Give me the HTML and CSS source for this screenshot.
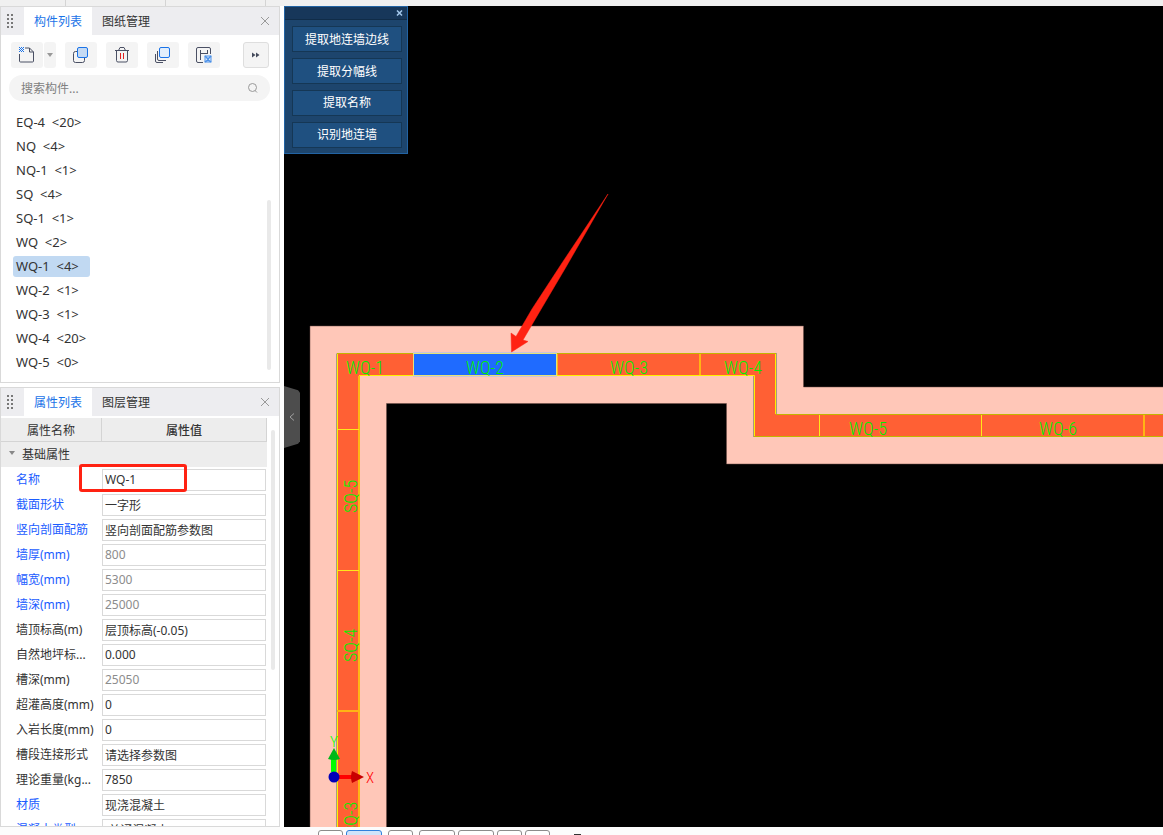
FILE: index.html
```html
<!DOCTYPE html>
<html lang="zh-CN">
<head>
<meta charset="utf-8">
<title>构件列表</title>
<link rel="stylesheet" href="styles.css">
</head>
<body>
<div class="app">
  <div class="ribbon-edge"><i></i><i></i><i></i></div>
  <aside class="sidebar">
    <section class="panel">
      <header class="tabs">
        <svg class="grip" width="8" height="15" viewBox="0 0 8 15"><path d="M1 0v15M5 0v15" stroke="#777" stroke-width="2" stroke-dasharray="2 2"/></svg>
        <button class="tab active">构件列表</button>
        <button class="tab">图纸管理</button>
        <button class="close" aria-label="关闭"><svg width="10" height="10" viewBox="0 0 10 10"><path d="M1 1l8 8M9 1l-8 8" stroke="#999"/></svg></button>
      </header>
      <div class="toolbar">
        <div class="split">
          <button class="tool" aria-label="新建"><svg width="18" height="18" viewBox="0 0 18 18" fill="none"><path d="M1.500 8v7a1 1 0 0 0 1 1h12a1 1 0 0 0 1-1V6l-4-4H7M11.500 2v4h4" stroke="#4a5064"/><path d="M1 1.500h5M1 3.500h5M1 5.500h5" stroke="#1a73e8" stroke-dasharray="1 1"/><path d="M2 2.500h4M2 4.500h4" stroke="#1a73e8" stroke-dasharray="1 1"/></svg></button>
          <button class="drop" aria-label="更多新建"><svg width="6" height="4" viewBox="0 0 6 4"><path d="M0 0h6L3 4z" fill="#999"/></svg></button>
        </div>
        <button class="tool" aria-label="复制"><svg width="18" height="18" viewBox="0 0 18 18"><rect x="1.500" y="5.500" width="11" height="11" rx="2" fill="#f4f4f4" stroke="#4a5064"/><rect x="5.500" y="1.500" width="10" height="10" rx="1.500" fill="#c5daf3" stroke="#1a73e8"/></svg></button>
        <button class="tool" aria-label="删除"><svg width="18" height="18" viewBox="0 0 18 18" fill="none"><path d="M2 4.500h14M5.500 4.500l1.500-3h4l1.500 3M3.500 4.500v10a1.500 1.500 0 0 0 1.500 1.500h8a1.500 1.500 0 0 0 1.500-1.500v-10" stroke="#4a5064"/><path d="M7.500 7v6M10.500 7v6" stroke="#e02020"/></svg></button>
        <button class="tool" aria-label="层间复制"><svg width="18" height="18" viewBox="0 0 18 18" fill="none"><path d="M1.500 8v7a1.500 1.500 0 0 0 1.500 1.500h6M3.500 5v8a1.500 1.500 0 0 0 1.500 1.500h7" stroke="#4a5064"/><rect x="5.500" y="1.500" width="10" height="10" rx="1.500" fill="#e2eefc" stroke="#1a73e8"/></svg></button>
        <button class="tool" aria-label="存档"><svg width="18" height="18" viewBox="0 0 18 18" fill="none"><path d="M8 16.500H3A1.500 1.500 0 0 1 1.500 15V3A1.500 1.500 0 0 1 3 1.500h11A1.500 1.500 0 0 1 15.500 3v5M5.500 4v10M5.500 7.500h7M12.500 4v4" stroke="#4a5064"/><rect x="10" y="10" width="6" height="6" fill="#dceafc" stroke="#4a90e8"/><path d="M10 10l3 3 3-3M10 16l3-2 3 2" stroke="#4a90e8" stroke-width="1.500"/></svg></button>
        <button class="tool more" aria-label="更多"><svg width="8" height="6" viewBox="0 0 8 6"><path d="M0 .5l3.500 2.500L0 5.500zM4 .5l3.500 2.500L4 5.500z" fill="#444b5c"/></svg></button>
      </div>
      <div class="search">
        <input type="text" placeholder="搜索构件..." aria-label="搜索构件">
        <svg width="12" height="12" viewBox="0 0 12 12" fill="none" stroke="#999"><circle cx="5.500" cy="5.500" r="4"/><path d="M8 8.500l2 2"/></svg>
      </div>
      <div class="list-wrap">
        <ul class="list">
          <li><span>EQ-4  &lt;20&gt;</span></li>
          <li><span>NQ  &lt;4&gt;</span></li>
          <li><span>NQ-1  &lt;1&gt;</span></li>
          <li><span>SQ  &lt;4&gt;</span></li>
          <li><span>SQ-1  &lt;1&gt;</span></li>
          <li><span>WQ  &lt;2&gt;</span></li>
          <li class="selected"><span>WQ-1  &lt;4&gt;</span></li>
          <li><span>WQ-2  &lt;1&gt;</span></li>
          <li><span>WQ-3  &lt;1&gt;</span></li>
          <li><span>WQ-4  &lt;20&gt;</span></li>
          <li><span>WQ-5  &lt;0&gt;</span></li>
        </ul>
        <div class="thumb list-thumb"></div>
      </div>
    </section>
    <section class="panel props">
      <header class="tabs">
        <svg class="grip" width="8" height="15" viewBox="0 0 8 15"><path d="M1 0v15M5 0v15" stroke="#777" stroke-width="2" stroke-dasharray="2 2"/></svg>
        <button class="tab active">属性列表</button>
        <button class="tab">图层管理</button>
        <button class="close" aria-label="关闭"><svg width="10" height="10" viewBox="0 0 10 10"><path d="M1 1l8 8M9 1l-8 8" stroke="#999"/></svg></button>
      </header>
      <div class="table-wrap">
        <table>
          <colgroup><col class="name-col"><col></colgroup>
          <thead><tr><th class="name-head">属性名称</th><th>属性值</th></tr></thead>
          <tbody>
            <tr class="group"><td colspan="2"><svg width="6" height="4" viewBox="0 0 6 4"><path d="M0 0h6L3 4z" fill="#888"/></svg>基础属性</td></tr>
            <tr class="key"><td><label for="p1">名称</label></td><td class="marked"><input id="p1" value="WQ-1"><span class="callout"></span></td></tr>
            <tr class="key"><td><label for="p2">截面形状</label></td><td><input id="p2" value="一字形"></td></tr>
            <tr class="key"><td><label for="p3">竖向剖面配筋</label></td><td><input id="p3" value="竖向剖面配筋参数图"></td></tr>
            <tr class="key"><td><label for="p4">墙厚(mm)</label></td><td><input id="p4" class="dim" value="800"></td></tr>
            <tr class="key"><td><label for="p5">幅宽(mm)</label></td><td><input id="p5" class="dim" value="5300"></td></tr>
            <tr class="key"><td><label for="p6">墙深(mm)</label></td><td><input id="p6" class="dim" value="25000"></td></tr>
            <tr><td><label for="p7">墙顶标高(m)</label></td><td><input id="p7" value="层顶标高(-0.05)"></td></tr>
            <tr><td><label for="p8">自然地坪标...</label></td><td><input id="p8" value="0.000"></td></tr>
            <tr><td><label for="p9">槽深(mm)</label></td><td><input id="p9" class="dim" value="25050"></td></tr>
            <tr><td><label for="p10">超灌高度(mm)</label></td><td><input id="p10" value="0"></td></tr>
            <tr><td><label for="p11">入岩长度(mm)</label></td><td><input id="p11" value="0"></td></tr>
            <tr><td><label for="p12">槽段连接形式</label></td><td><input id="p12" value="请选择参数图"></td></tr>
            <tr><td><label for="p13">理论重量(kg...</label></td><td><input id="p13" value="7850"></td></tr>
            <tr class="key"><td><label for="p14">材质</label></td><td><input id="p14" value="现浇混凝土"></td></tr>
            <tr class="key"><td><label for="p15">混凝土类型</label></td><td><input id="p15" value="(普通混凝土)"></td></tr>
          </tbody>
        </table>
        <div class="thumb props-thumb"></div>
      </div>
    </section>
  </aside>
  <main class="canvas">
    <svg class="drawing" width="100%" height="100%">
      <g transform="translate(-284 -6)">
        <path d="M310 326H803.500V387H2400V464H726.500V403.500H386.500V2400H310z" fill="#ffc7b8" stroke="#6b4a44" stroke-width="0.500"/>
        <path d="M337.500 353.500H776V414.500H2400V436.500H754V375.500H359.500V2400H337.500z" fill="#ff6034"/>
        <path d="M336.500 2400V353.500M776.500 353V414M753.500 376V437" fill="none" stroke="#a89a80"/>
        <path d="M337.500 2400V353.500M413 375.500H754.500V436M359 375.500H413M775.500 353.500V414" fill="none" stroke="#fff000"/>
        <path d="M337 353.500H776M776 414.500H2400M754 436.500H2400" fill="none" stroke="#c4b400"/>
        <path d="M359 376V2400M700 354V375M557 354V375M337 711H359M1144 415V436" fill="none" stroke="#ffb414" stroke-width="2"/>
        <path d="M337 429.500H359M337 570.500H359M819.500 415V436M981.500 415V436" fill="none" stroke="#ffe81a"/>
        <rect x="413.500" y="353.500" width="143" height="22" fill="#1f6bff" stroke="#e5e27a"/>
        <path d="M413 352.500H557M413 376.500H557" stroke="#c8c4dc"/>
        <g class="cad">
          <text x="346" y="374">WQ-1</text>
          <text x="466" y="374">WQ-2</text>
          <text x="610" y="374">WQ-3</text>
          <text x="724" y="374">WQ-4</text>
          <text x="849" y="435">WQ-5</text>
          <text x="1039" y="435">WQ-6</text>
          <text transform="translate(357 513) rotate(-90)">SQ-5</text>
          <text transform="translate(357 662) rotate(-90)">SQ-4</text>
          <text transform="translate(357 835) rotate(-90)">SQ-3</text>
        </g>
        <path d="M331 758h5v14h-5z" fill="#0f0"/><path d="M334 748l6 11q-6 2-12 0z" fill="#00b818"/>
        <path d="M338 775h14v4h-14z" fill="#f00"/><path d="M364 777l-12 6q-2-6 0-12z" fill="#c80000"/>
        <circle cx="334" cy="777" r="5.500" fill="#0000b8"/>
        <text class="axis" x="334" y="747" fill="#0f0">Y</text>
        <text class="axis" x="370" y="783" fill="#f00">X</text>
        <path d="M608 194L566 267L540 311L523 340L528 341.500L511.500 352L511 333L516 336.500L532 309L562 263z" fill="#ff2212" stroke="#ff2212" stroke-width="0.500"/>
      </g>
    </svg>
    <div class="dialog">
      <div class="dialog-title"><button aria-label="关闭"><svg width="7" height="6" viewBox="0 0 7 6"><path d="M1 .5l5 5M6 .5l-5 5" stroke="#a4c8ec" stroke-width="1.500"/></svg></button></div>
      <div class="dialog-body">
        <button>提取地连墙边线</button>
        <button>提取分幅线</button>
        <button>提取名称</button>
        <button>识别地连墙</button>
      </div>
    </div>
    <button class="collapse" aria-label="收起"><svg width="6" height="8" viewBox="0 0 6 8"><path d="M5 .5L1 4l4 3.500" fill="none" stroke="#a0a0a0"/></svg></button>
  </main>
  <footer class="statusbar">
    <button aria-label="捕捉"></button><button class="wide on" aria-label="正交"></button><button class="spaced" aria-label="点"></button><button class="wide spaced" aria-label="线"></button><button class="wide" aria-label="面"></button><button aria-label="视图"></button><button aria-label="设置"></button><i></i>
  </footer>
</div>
</body>
</html>
```
FILE: styles.css
```css
* { box-sizing: border-box; }
body { margin: 0; font: 12px/18px "Noto Sans", "Noto Sans CJK SC", sans-serif; color: #333; background: #fff; }
button, input { font: inherit; color: inherit; margin: 0; padding: 0; border: 0; background: none; }
button { display: flex; align-items: center; justify-content: center; }
svg { display: block; flex: none; }

.app { display: grid; grid-template: 6px minmax(0, 1fr) 8px / 280px minmax(0, 1fr); column-gap: 4px; height: 100vh; overflow: hidden; }
.ribbon-edge { grid-column: 1 / -1; display: flex; background: #f0f0f0; }
.ribbon-edge i { width: 100px; border-right: 1px solid #d4d4d4; }
.ribbon-edge i:first-child { width: 66px; }

.sidebar { display: flex; flex-direction: column; gap: 4px; min-height: 0; }
.panel { border: 1px solid #d9d9d9; background: #fff; }
.props { flex: 1; min-height: 0; overflow: hidden; }
.tabs { display: flex; align-items: stretch; height: 28px; background: #ededf0; }
.grip { align-self: center; margin: 0 9px 0 6px; }
.tab { width: 68px; padding-top: 2px; }
.tab.active { background: #fff; color: #1a73e8; }
.close { margin-left: auto; width: 28px; }

.toolbar { display: flex; gap: 9px; padding: 7px 10px; }
.split { display: flex; gap: 1px; }
.tool, .drop { width: 32px; height: 26px; border-radius: 3px; background: #f4f4f4; }
.drop { width: 12px; }
.more { width: 26px; margin-left: auto; border: 1px solid #dedede; }
.search { display: flex; align-items: center; height: 26px; margin: 0 9px 0 8px; padding: 0 11px 0 12px; border-radius: 13px; background: #f4f4f4; }
.search input { flex: 1; min-width: 0; padding-top: 2px; outline: 0; }
.search input::placeholder { color: #808080; opacity: 1; }

.list-wrap { display: flex; justify-content: space-between; padding: 9px 8px 8px 12px; }
.list { margin: 0; padding: 0; list-style: none; font-size: 13px; }
.list li { height: 24px; display: flex; align-items: center; }
.list span { padding: 0 11px 0 3px; line-height: 21px; border-radius: 3px; white-space: pre; }
.selected span { background: #c1d9f2; }
.thumb { width: 4px; border-radius: 2px; background: #e9e9e9; }
.list-thumb { height: 170px; align-self: flex-end; margin-bottom: 4px; }

.table-wrap { display: flex; gap: 4px; padding: 2px 4px 0 0; }
table { flex: 1; border-collapse: separate; border-spacing: 0; table-layout: fixed; }
.name-col { width: 101px; }
th { height: 24px; padding: 2px 0 0; background: #ededed; border: solid #d4d4d4; border-width: 0 1px 1px 0; font-weight: 500; }
.name-head { font-weight: 400; }
td { height: 25px; padding: 0; white-space: nowrap; }
td label { padding-left: 15px; }
.key label { color: #1a5cff; }
.group td { background: #ededed; }
.group svg { display: inline-block; margin: 0 7px 4px 8px; vertical-align: middle; }
td input { display: block; width: calc(100% - 1px); height: 22px; padding: 0 2px; border: 1px solid #d9d9d9; background: #fff; }
td .dim { color: #8c8c8c; }
.marked { position: relative; }
.callout { position: absolute; left: -23px; top: -3px; width: 108px; height: 28px; border: 3px solid #ff2212; border-radius: 3px; pointer-events: none; }
.props-thumb { height: 240px; margin-top: 12px; }

.canvas { position: relative; background: #000; overflow: hidden; }
.drawing { position: absolute; inset: 0; }
.cad { font: 300 18px "Roboto Condensed", Roboto, "Liberation Sans Narrow", sans-serif; font-stretch: condensed; fill: #00f000; }
.cad { font-stretch: normal; }
.axis { font: 300 15px "Roboto Condensed", "Liberation Sans Narrow", sans-serif; text-anchor: middle; }
.dialog { position: absolute; left: 0; top: 0; width: 124px; border: 1px solid #2263a3; background: #1d456d; color: #fff; }
.dialog-title { display: flex; justify-content: flex-end; height: 13px; padding-right: 4px; background: #17375a; border-bottom: 1px solid #102c48; }
.dialog-body { display: flex; flex-direction: column; gap: 6px; padding: 6px 5px 5px 7px; }
.dialog-body button { height: 26px; border: 1px solid #153755; background: #1f5080; }
.dialog-body button:nth-child(-n+2) { padding-top: 1px; }
.collapse { position: absolute; left: 0; top: 380px; width: 16px; height: 62px; background: #4d4d4d; clip-path: polygon(0 0, 88% 7%, 100% 11%, 100% 89%, 88% 93%, 0 100%); }

.statusbar { grid-column: 1 / -1; display: flex; gap: 3px; padding: 3px 0 0 318px; background: #fcfcfc; overflow: hidden; }
.statusbar button { flex: none; width: 25px; height: 20px; border: 1px solid #8c8c8c; border-radius: 3px; background: #fff; }
.statusbar .wide { width: 36px; }
.statusbar .on { border-color: #2f80dc; background: #cfe3fa; }
.statusbar .spaced { margin-left: 3px; }
.statusbar i { width: 7px; height: 20px; margin: 4px 0 0 21px; background: #333; }
```
